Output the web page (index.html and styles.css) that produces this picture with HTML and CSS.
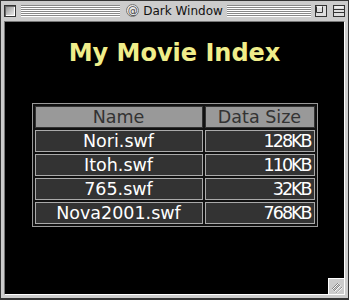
FILE: index.html
```html
<!DOCTYPE html>
<html>
<head>
<meta charset="utf-8">
<link rel="stylesheet" href="styles.css">
</head>
<body>
<div class="window">
  <div class="titlebar">
    <div class="tb-side tb-left">
      <span class="closebox"></span>
      <span class="stripes"></span>
    </div>
    <div class="tb-title"><span class="proxy">@</span><span class="tb-text">Dark Window</span></div>
    <div class="tb-side tb-right">
      <span class="stripes"></span>
      <svg class="wbox" width="12" height="12" viewBox="0 0 12 12">
        <rect x="0.5" y="0.5" width="11" height="11" fill="#ddd" stroke="#333"/>
        <path d="M1.5 1.5 V7.5 H7.5 V1.5" fill="none" stroke="#333"/>
        <path d="M2 2 H7" stroke="#fff"/>
      </svg>
      <svg class="wbox" width="12" height="12" viewBox="0 0 12 12">
        <rect x="0.5" y="0.5" width="11" height="11" fill="#ddd" stroke="#333"/>
        <path d="M1 4.5 H11 M1 7.5 H11" stroke="#333"/>
        <path d="M2 2 H10" stroke="#fff"/>
      </svg>
    </div>
  </div>
  <div class="frame">
    <div class="content">
      <h1 class="heading">My Movie Index</h1>
      <table class="movies">
        <tr class="head"><td class="c-name">Name</td><td class="c-size">Data Size</td></tr>
        <tr><td class="c-name">Nori.swf</td><td class="c-size num">128KB</td></tr>
        <tr><td class="c-name">Itoh.swf</td><td class="c-size num">110KB</td></tr>
        <tr><td class="c-name">765.swf</td><td class="c-size num">32KB</td></tr>
        <tr><td class="c-name">Nova2001.swf</td><td class="c-size num">768KB</td></tr>
      </table>
      <div class="growbox">
        <svg width="16" height="16" viewBox="0 0 16 16">
          <rect x="0" y="0" width="16" height="16" fill="#ccc"/>
          <path d="M0 0.5 H16 M0.5 0 V16" stroke="#fff"/>
          <path d="M4 11 L10 5 M6 13 L12 7 M8 15 L14 9 M5 12 L11 6" stroke="#888"/>
          <path d="M4.5 11.5 L10.5 5.5 M6.5 13.5 L12.5 7.5 M8.5 15 L14.5 9.5" stroke="#fff"/>
        </svg>
      </div>
    </div>
  </div>
</div>
</body>
</html>
```

FILE: styles.css
```css
html, body {
  margin: 0;
  padding: 0;
  background: #000;
}
.window {
  width: 349px;
  height: 300px;
  box-sizing: border-box;
  border: 1px solid #333;
  border-bottom-width: 2px;
  background: #cccccc;
  display: flex;
  flex-direction: column;
}
.titlebar {
  height: 19px;
  display: grid;
  grid-template-columns: 1fr auto 1fr;
  align-items: center;
  font-family: "DejaVu Sans", sans-serif;
  font-size: 12px;
  color: #111;
}
.tb-side {
  display: flex;
  align-items: center;
  height: 12px;
}
.tb-left {
  padding-left: 3px;
  gap: 5px;
  margin-right: 6px;
}
.tb-right {
  padding-right: 3px;
  margin-left: 4px;
}
.tb-right .stripes {
  margin-right: 4px;
}
.tb-right .wbox + .wbox {
  margin-left: 6px;
}
.closebox {
  width: 12px;
  height: 12px;
  box-sizing: border-box;
  border: 1px solid #333;
  background: linear-gradient(135deg, #888 0%, #bbb 45%, #eee 100%);
  box-shadow: inset 1px 1px 0 #666, inset -1px -1px 0 #fff;
  flex: none;
}
.stripes {
  flex: 1;
  height: 12px;
  background: repeating-linear-gradient(to bottom, #888 0 1px, #fff 1px 2px);
}
.wbox {
  display: block;
  flex: none;
}
.tb-title {
  display: flex;
  align-items: center;
  gap: 4px;
  line-height: 14px;
}
.proxy {
  display: inline-block;
  width: 13px;
  height: 13px;
  box-sizing: border-box;
  border-radius: 50%;
  border: 1px solid #777;
  background: #e8e8e8;
  font-size: 10px;
  line-height: 11px;
  text-align: center;
  color: #444;
}
.frame {
  flex: 1;
  margin: 1px 3px 3px 3px;
  border: 1px solid;
  border-color: #777 #fff #fff #777;
  display: flex;
}
.content {
  position: relative;
  flex: 1;
  background: #000;
  display: flex;
  flex-direction: column;
  align-items: center;
}
.heading {
  margin: 17px 0 0 0;
  font-family: "DejaVu Sans", sans-serif;
  font-weight: bold;
  font-size: 24px;
  line-height: 28px;
  color: #f0ee8a;
}
.movies {
  margin-top: 36px;
  border: 1px solid #999;
  border-spacing: 2px;
  background: #111;
  font-family: "DejaVu Sans", sans-serif;
  font-size: 17.5px;
}
.movies td {
  height: 20px;
  padding: 0 1px;
  border: 1px solid #aaa;
  background: #333;
  color: #fff;
  line-height: 20px;
  text-align: center;
}
.movies .head td {
  background: #999;
  color: #333;
  border-color: #333;
}
.c-name {
  width: 164px;
}
.c-size {
  width: 104px;
}
.movies td.num {
  text-align: right;
  letter-spacing: -2px;
  padding-right: 3px;
}
.growbox {
  position: absolute;
  right: 0;
  bottom: 0;
  width: 16px;
  height: 16px;
}
.growbox svg {
  display: block;
}
```
